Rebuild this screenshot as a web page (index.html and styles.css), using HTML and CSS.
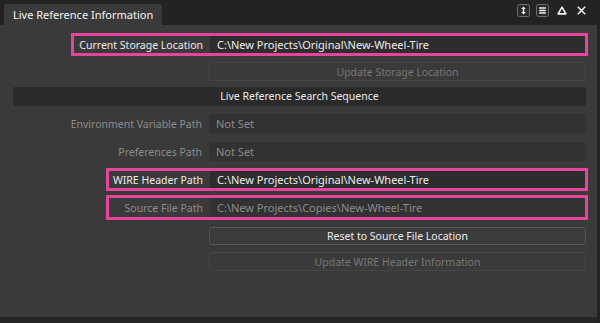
FILE: index.html
```html
<!DOCTYPE html>
<html lang="en">
<head>
    <meta charset="UTF-8" />
    <meta name="viewport" content="width=device-width, initial-scale=1.0"/>
    <title>Live Reference Information</title>
    <link rel="stylesheet" href="styles.css">
</head>
<body>
<div class="window">
    <div class="tab-bar">
        <div class="tab">Live Reference Information</div>
        <div class="tools">
            <span class="tool tool-boxed">
                <svg width="13" height="13" viewBox="0 0 13 13">
                    <rect x="0.5" y="0.5" width="12" height="12" rx="2" fill="#2a2a2a" stroke="#6e6e6e"/>
                    <path d="M6.5 4.3 V8.7" stroke="#f2f2f2" stroke-width="1.4"/>
                    <path d="M4.2 5 L6.5 2.5 L8.8 5 Z" fill="#f2f2f2"/>
                    <path d="M4.2 8 L6.5 10.5 L8.8 8 Z" fill="#f2f2f2"/>
                </svg>
            </span>
            <span class="tool tool-boxed">
                <svg width="13" height="13" viewBox="0 0 13 13">
                    <rect x="0.5" y="0.5" width="12" height="12" rx="2" fill="#2a2a2a" stroke="#6e6e6e"/>
                    <path d="M3.2 4 H9.8 M3.2 6.5 H9.8 M3.2 9 H9.8" stroke="#f2f2f2" stroke-width="1.3"/>
                </svg>
            </span>
            <span class="tool tool-up">
                <svg width="10" height="9" viewBox="0 0 10 9">
                    <path d="M5 1.2 L8.9 7.9 H1.1 Z" fill="none" stroke="#f2f2f2" stroke-width="1.6" stroke-linejoin="round"/>
                </svg>
            </span>
            <span class="tool tool-close">
                <svg width="9" height="9" viewBox="0 0 9 9">
                    <path d="M0.8 0.8 L8.2 8.2 M8.2 0.8 L0.8 8.2" stroke="#f2f2f2" stroke-width="1.5"/>
                </svg>
            </span>
        </div>
    </div>

    <div class="panel">
        <div class="row row-first">
            <div class="highlight">
                <span class="label active">Current Storage Location</span>
                <div class="field active">C:\New Projects\Original\New-Wheel-Tire</div>
            </div>
        </div>

        <div class="row">
            <button class="btn" disabled>Update Storage Location</button>
        </div>

        <div class="section-title">Live Reference Search Sequence</div>

        <div class="row">
            <span class="label">Environment Variable Path</span>
            <div class="field">Not Set</div>
        </div>

        <div class="row row-spaced">
            <span class="label">Preferences Path</span>
            <div class="field">Not Set</div>
        </div>

        <div class="row row-spaced">
            <div class="highlight highlight-paths">
                <span class="label active">WIRE Header Path</span>
                <div class="field active">C:\New Projects\Original\New-Wheel-Tire</div>
            </div>
        </div>

        <div class="row row-tall">
            <div class="highlight highlight-paths">
                <span class="label">Source File Path</span>
                <div class="field">C:\New Projects\Copies\New-Wheel-Tire</div>
            </div>
        </div>

        <div class="row row-reset">
            <button class="btn btn-enabled">Reset to Source File Location</button>
        </div>

        <div class="row row-last">
            <button class="btn" disabled>Update WIRE Header Information</button>
        </div>
    </div>

    <div class="status-bar"></div>
</div>
</body>
</html>
```

FILE: styles.css
```css
:root {
    --bg-darker: #232323;
    --panel: #3a3a3a;
    --field: #323232;
    --field-active: #2d2d2d;
    --title-bar: #2a2a2a;
    --text: #ececec;
    --text-dim: #8c8c8c;
    --text-disabled: #777777;
    --highlight: #e8449a;
}

body {
    font-family: 'Noto Sans', 'Open Sans', sans-serif;
    font-size: 10.5px;
    margin: 0;
    padding: 0;
    background-color: var(--bg-darker);
    color: var(--text);
}

.window {
    display: flex;
    flex-direction: column;
    width: 597px;
    height: 323px;
    background: var(--bg-darker);
}

/* Tab strip */
.tab-bar {
    display: flex;
    align-items: flex-start;
    height: 25px;
    padding-left: 4px;
    padding-right: 11px;
}

.tab {
    margin-top: 4px;
    height: 21px;
    line-height: 21px;
    padding: 0 9px 0 9px;
    background: var(--panel);
    border-radius: 3px 3px 0 0;
    color: #f4f4f4;
    font-size: 11px;
}

.tools {
    display: flex;
    align-items: center;
    gap: 6px;
    margin-left: auto;
    margin-top: 4px;
    height: 13px;
}

.tool {
    display: flex;
    align-items: center;
    justify-content: center;
}

.tool-up {
    margin-left: 2px;
}

.tool-close {
    margin-left: 4px;
}

/* Main panel */
.panel {
    flex: 1;
    display: flex;
    flex-direction: column;
    padding: 10px 11px 0 13px;
    background: var(--panel);
}

.row {
    display: flex;
    justify-content: flex-end;
    align-items: stretch;
    height: 19px;
    margin-top: 8px;
}

.row-first {
    margin-top: 0;
}

.row-spaced {
    margin-top: 9px;
}

.row-tall {
    height: 21px;
}

.row-reset {
    height: 18px;
    margin-top: 9px;
}

.row-last {
    margin-top: 7px;
}

.highlight {
    display: flex;
    outline: 3px solid var(--highlight);
    outline-offset: -1px;
}

.label {
    display: flex;
    align-items: center;
    justify-content: flex-end;
    padding: 0 7px 0 6px;
    color: var(--text-dim);
    white-space: nowrap;
}

.label.active {
    color: var(--text);
}

/* both path boxes share the same left edge */
.highlight-paths .label {
    box-sizing: border-box;
    width: 102px;
}

.field {
    display: flex;
    align-items: center;
    box-sizing: border-box;
    width: 377px;
    padding-left: 7px;
    border-radius: 2px;
    background: var(--field);
    color: var(--text-dim);
    font-size: 11px;
}

.field.active {
    background: var(--field-active);
    color: var(--text);
}

.highlight .field {
    width: 376px;
    border-radius: 0;
}

.section-title {
    height: 19px;
    line-height: 19px;
    margin-top: 6px;
    background: var(--title-bar);
    border-radius: 2px;
    text-align: center;
    color: var(--text);
}

.btn {
    width: 377px;
    padding: 0;
    font-family: inherit;
    font-size: 10.5px;
    color: var(--text-disabled);
    background: var(--panel);
    border: 1px solid #454545;
    border-radius: 2px;
}

.btn-enabled {
    color: var(--text);
    border-color: #555555;
    background: #3c3c3c;
    cursor: pointer;
}

.status-bar {
    height: 6px;
    background: #262626;
}
```
